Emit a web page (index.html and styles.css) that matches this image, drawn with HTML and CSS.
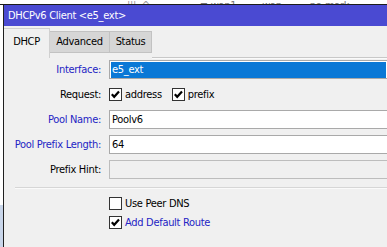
FILE: index.html
```html
<!DOCTYPE html>
<html>
<head>
<meta charset="utf-8">
<link rel="stylesheet" href="styles.css">
</head>
<body>
<div class="screen">
  <div class="bgtop">
    <span class="frag f1">|||  ^</span>
    <span class="frag f2">≡ wan1</span>
    <span class="frag f3">wan</span>
    <span class="frag f4">no-mark</span>
  </div>
  <div class="main">
    <div class="bgleft"></div>
    <div class="dialog">
      <div class="titlebar">DHCPv6 Client &lt;e5_ext&gt;</div>
      <div class="tabs">
        <div class="tab active">DHCP</div>
        <div class="tab">Advanced</div>
        <div class="tab">Status</div>
        <div class="tabfill"></div>
      </div>
      <div class="form">
        <div class="row">
          <div class="label blue">Interface:</div>
          <div class="field"><span class="sel">e5_ext</span></div>
        </div>
        <div class="row">
          <div class="label">Request:</div>
          <div class="checks">
            <span class="cb"><svg viewBox="0 0 13 13" width="13" height="13"><path d="M2.8 6.3 L5.2 8.8 L10 3.6" fill="none" stroke="#000" stroke-width="2.2"/></svg></span>
            <span class="cbtext">address</span>
            <span class="cb cb2"><svg viewBox="0 0 13 13" width="13" height="13"><path d="M2.8 6.3 L5.2 8.8 L10 3.6" fill="none" stroke="#000" stroke-width="2.2"/></svg></span>
            <span class="cbtext">prefix</span>
          </div>
        </div>
        <div class="row">
          <div class="label blue">Pool Name:</div>
          <div class="field">Poolv6</div>
        </div>
        <div class="row">
          <div class="label blue">Pool Prefix Length:</div>
          <div class="field">64</div>
        </div>
        <div class="row">
          <div class="label">Prefix Hint:</div>
          <div class="field disabled"></div>
        </div>
        <div class="sep"></div>
        <div class="crow">
          <span class="cb"></span>
          <span class="cbtext">Use Peer DNS</span>
        </div>
        <div class="crow">
          <span class="cb"><svg viewBox="0 0 13 13" width="13" height="13"><path d="M2.8 6.3 L5.2 8.8 L10 3.6" fill="none" stroke="#000" stroke-width="2.2"/></svg></span>
          <span class="cbtext blue">Add Default Route</span>
        </div>
      </div>
    </div>
  </div>
</div>
</body>
</html>
```
FILE: styles.css
```css
* { box-sizing: border-box; }
html, body { margin: 0; padding: 0; }
body {
  font-family: "DejaVu Sans Condensed", "DejaVu Sans", sans-serif;
  font-stretch: condensed;
  font-size: 11px;
  letter-spacing: -0.3px;
  color: #000;
  background: #fff;
}
.screen {
  width: 387px;
  height: 247px;
  overflow: hidden;
  display: flex;
  flex-direction: column;
}
.bgtop {
  height: 5px;
  flex: none;
  background: #fff;
  border-bottom: 1px solid #1c1c1c;
  overflow: hidden;
  display: flex;
  align-items: flex-end;
}
.frag {
  color: #777;
  line-height: 12px;
  margin-bottom: -8px;
  white-space: pre;
}
.f1 { margin-left: 127px; color: #999; }
.f2 { margin-left: 50px; }
.f3 { margin-left: 26px; }
.f4 { margin-left: 28px; }
.main {
  flex: 1;
  display: flex;
}
.bgleft {
  width: 3px;
  flex: none;
  background: linear-gradient(#fff 0 200px, #c9d6ea 200px);
}
.dialog {
  flex: 1;
  background: #f0f0f0;
  border-left: 1px solid #202020;
  display: flex;
  flex-direction: column;
}
.titlebar {
  height: 21px;
  background: #4a4ad2;
  color: #fff;
  line-height: 21px;
  padding-left: 4px;
  white-space: nowrap;
}
.tabs {
  display: flex;
  align-items: flex-end;
  height: 32px;
  padding-top: 2px;
}
.tab {
  height: 22px;
  margin-bottom: 5px;
  background: #d6d6d6;
  border: 1px solid #c2c2c2;
  border-left: none;
  line-height: 20px;
  text-align: center;
}
.tab:nth-child(2) { width: 60px; }
.tab:nth-child(3) { width: 42px; }
.tab.active {
  width: 46px;
  height: 30px;
  margin-bottom: 0;
  background: #f0f0f0;
  border: 1px solid #d0d0d0;
  border-bottom: none;
  border-left: none;
  line-height: 26px;
}
.tabfill {
  flex: 1;
  height: 1px;
  background: #c8c8c8;
  border-bottom: 1px solid #fafafa;
  box-sizing: content-box;
  margin-bottom: -1px;
}
.form {
  padding-top: 2px;
  display: flex;
  flex-direction: column;
}
.row {
  display: flex;
  align-items: center;
  height: 19px;
  margin-bottom: 6px;
}
.label {
  width: 97px;
  text-align: right;
  margin-right: 8px;
  white-space: nowrap;
  flex: none;
}
.blue { color: #2424c4; }
.field {
  flex: 1;
  height: 19px;
  background: #fff;
  border: 1px solid #a9a9a9;
  border-right: none;
  padding: 1px 2px 1px 2px;
  line-height: 15px;
}
.field.disabled {
  background: #f0f0f0;
  border-color: #bdbdbd;
}
.sel {
  display: block;
  height: 16px;
  margin: 0 -1px;
  background: #0a78d6;
  color: #fff;
  padding-left: 1px;
}
.checks {
  display: flex;
  align-items: center;
}
.cb {
  width: 13px;
  height: 13px;
  flex: none;
  background: #fff;
  border: 1px solid #333;
  display: inline-flex;
  align-items: center;
  justify-content: center;
}
.cb svg { display: block; margin: -1px; }
.cbtext {
  margin-left: 3px;
  white-space: nowrap;
}
.cb2 { margin-left: 10px; }
.sep {
  height: 1px;
  margin: 2px 0 5px 11px;
  background: #d6d6d6;
  border-bottom: 1px solid #fafafa;
  box-sizing: content-box;
}
.crow {
  display: flex;
  align-items: center;
  height: 19px;
  padding-left: 105px;
}
```
